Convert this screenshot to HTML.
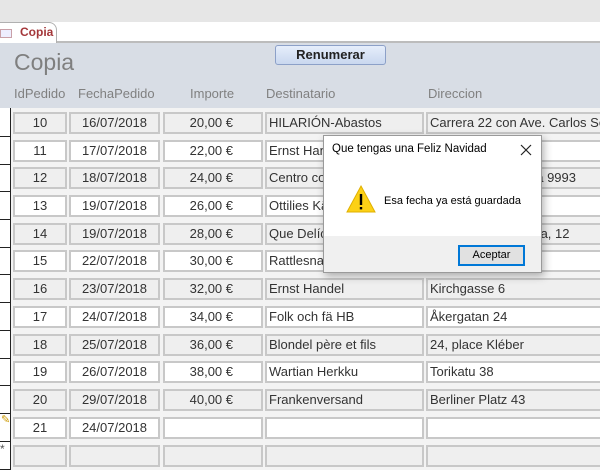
<!DOCTYPE html>
<html><head><meta charset="utf-8"><style>
*{margin:0;padding:0;box-sizing:border-box}
body{width:600px;height:468px;overflow:hidden;position:relative;background:#f3f3f3;font-family:"Liberation Sans",sans-serif;}
.a{position:absolute}
.top{left:0;top:0;width:600px;height:22px;background:#e6e6e6}
.tabbar{left:0;top:22px;width:600px;height:21px;background:#fff;border-bottom:2px solid #bcbcbc}
.tab{left:-4px;top:22px;width:61px;height:23px;background:#fff;border:1px solid #b0b0b0;border-bottom:none;border-radius:0 8px 0 0;}
.hdr{left:0;top:43px;width:600px;height:65px;background:#d8dde5}
.lbl{color:#808080;font-size:13px;top:86px}
.c{position:absolute;height:22px;border:2px solid #c8c8c8;font-size:13px;color:#333;line-height:18px;white-space:nowrap;overflow:hidden;padding:0 2px}
.g{background:#efefef}.w{background:#fff}
.ctr{text-align:center}.r{text-align:right;padding-right:28px}
.sel{position:absolute;left:0;width:11px;border-right:1px solid #222;border-bottom:1px solid #222;background:#fff}
</style></head><body>
<div class="a top"></div>
<div class="a tabbar"></div>
<div class="a tab"></div>
<div class="a" style="left:0;top:29px;width:12px;height:9px;border:1px solid #c9a0a8;background:#eef"></div>
<div class="a" style="left:20px;top:25px;font-size:12px;font-weight:bold;color:#a4373a">Copia</div>
<div class="a hdr"></div>
<div class="a" style="left:14px;top:49px;font-size:23px;color:#7f7f7f">Copia</div>
<div class="a" style="left:275px;top:45px;width:111px;height:20px;border:1px solid #8ca0c8;border-radius:3px;background:linear-gradient(#e6eefb,#c9d7ef);font-size:13px;font-weight:bold;text-align:center;line-height:18px;color:#222">Renumerar</div>
<div class="a lbl" style="left:14px">IdPedido</div>
<div class="a lbl" style="left:78px">FechaPedido</div>
<div class="a lbl" style="left:190px">Importe</div>
<div class="a lbl" style="left:266px">Destinatario</div>
<div class="a lbl" style="left:428px">Direccion</div>
<div class="a" style="left:0;top:108px;width:11px;height:360px;background:#fff;border-right:1px solid #222"></div>

<div class="sel" style="top:108px;height:29px"></div><div class="c g ctr" style="left:13px;top:112px;width:54px">10</div><div class="c g ctr" style="left:69px;top:112px;width:91px">16/07/2018</div><div class="c g r" style="left:163px;top:112px;width:100px">20,00 €</div><div class="c g" style="left:265px;top:112px;width:159px">HILARIÓN-Abastos</div><div class="c g" style="left:426px;top:112px;width:180px">Carrera 22 con Ave. Carlos Soublette</div>
<div class="sel" style="top:137px;height:28px"></div><div class="c w ctr" style="left:13px;top:140px;width:54px">11</div><div class="c w ctr" style="left:69px;top:140px;width:91px">17/07/2018</div><div class="c w r" style="left:163px;top:140px;width:100px">22,00 €</div><div class="c w" style="left:265px;top:140px;width:159px">Ernst Handel</div><div class="c w" style="left:426px;top:140px;width:180px">Kirchgasse 6</div>
<div class="sel" style="top:165px;height:27px"></div><div class="c g ctr" style="left:13px;top:167px;width:54px">12</div><div class="c g ctr" style="left:69px;top:167px;width:91px">18/07/2018</div><div class="c g r" style="left:163px;top:167px;width:100px">24,00 €</div><div class="c g" style="left:265px;top:167px;width:159px">Centro comercial Moctezuma</div><div class="c g" style="left:426px;top:167px;width:180px">Sierras de Granada 9993</div>
<div class="sel" style="top:192px;height:28px"></div><div class="c w ctr" style="left:13px;top:195px;width:54px">13</div><div class="c w ctr" style="left:69px;top:195px;width:91px">19/07/2018</div><div class="c w r" style="left:163px;top:195px;width:100px">26,00 €</div><div class="c w" style="left:265px;top:195px;width:159px">Ottilies Käseladen</div><div class="c w" style="left:426px;top:195px;width:180px">Mehrheimerstr. 369</div>
<div class="sel" style="top:220px;height:28px"></div><div class="c g ctr" style="left:13px;top:223px;width:54px">14</div><div class="c g ctr" style="left:69px;top:223px;width:91px">19/07/2018</div><div class="c g r" style="left:163px;top:223px;width:100px">28,00 €</div><div class="c g" style="left:265px;top:223px;width:159px">Que Delícia</div><div class="c g" style="left:426px;top:223px;width:180px">Rua da Panificadora, 12</div>
<div class="sel" style="top:248px;height:27px"></div><div class="c w ctr" style="left:13px;top:250px;width:54px">15</div><div class="c w ctr" style="left:69px;top:250px;width:91px">22/07/2018</div><div class="c w r" style="left:163px;top:250px;width:100px">30,00 €</div><div class="c w" style="left:265px;top:250px;width:159px">Rattlesnake Canyon Grocery</div><div class="c w" style="left:426px;top:250px;width:180px">2817 Milton Dr.</div>
<div class="sel" style="top:275px;height:28px"></div><div class="c g ctr" style="left:13px;top:278px;width:54px">16</div><div class="c g ctr" style="left:69px;top:278px;width:91px">23/07/2018</div><div class="c g r" style="left:163px;top:278px;width:100px">32,00 €</div><div class="c g" style="left:265px;top:278px;width:159px">Ernst Handel</div><div class="c g" style="left:426px;top:278px;width:180px">Kirchgasse 6</div>
<div class="sel" style="top:303px;height:28px"></div><div class="c w ctr" style="left:13px;top:306px;width:54px">17</div><div class="c w ctr" style="left:69px;top:306px;width:91px">24/07/2018</div><div class="c w r" style="left:163px;top:306px;width:100px">34,00 €</div><div class="c w" style="left:265px;top:306px;width:159px">Folk och fä HB</div><div class="c w" style="left:426px;top:306px;width:180px">Åkergatan 24</div>
<div class="sel" style="top:331px;height:28px"></div><div class="c g ctr" style="left:13px;top:334px;width:54px">18</div><div class="c g ctr" style="left:69px;top:334px;width:91px">25/07/2018</div><div class="c g r" style="left:163px;top:334px;width:100px">36,00 €</div><div class="c g" style="left:265px;top:334px;width:159px">Blondel père et fils</div><div class="c g" style="left:426px;top:334px;width:180px">24, place Kléber</div>
<div class="sel" style="top:359px;height:27px"></div><div class="c w ctr" style="left:13px;top:361px;width:54px">19</div><div class="c w ctr" style="left:69px;top:361px;width:91px">26/07/2018</div><div class="c w r" style="left:163px;top:361px;width:100px">38,00 €</div><div class="c w" style="left:265px;top:361px;width:159px">Wartian Herkku</div><div class="c w" style="left:426px;top:361px;width:180px">Torikatu 38</div>
<div class="sel" style="top:386px;height:28px"></div><div class="c g ctr" style="left:13px;top:389px;width:54px">20</div><div class="c g ctr" style="left:69px;top:389px;width:91px">29/07/2018</div><div class="c g r" style="left:163px;top:389px;width:100px">40,00 €</div><div class="c g" style="left:265px;top:389px;width:159px">Frankenversand</div><div class="c g" style="left:426px;top:389px;width:180px">Berliner Platz 43</div>
<div class="sel" style="top:414px;height:28px"></div><div class="c w ctr" style="left:13px;top:417px;width:54px">21</div><div class="c w ctr" style="left:69px;top:417px;width:91px">24/07/2018</div><div class="c w r" style="left:163px;top:417px;width:100px"></div><div class="c w" style="left:265px;top:417px;width:159px"></div><div class="c w" style="left:426px;top:417px;width:180px"></div>
<div class="a" style="left:1px;top:413px;font-size:11px;color:#c90">✎</div>
<div class="sel" style="top:442px;height:28px"></div><div class="c g" style="left:13px;top:445px;width:54px"></div><div class="c g" style="left:69px;top:445px;width:91px"></div><div class="c g" style="left:163px;top:445px;width:100px"></div><div class="c g" style="left:265px;top:445px;width:159px"></div><div class="c g" style="left:426px;top:445px;width:180px"></div>
<div class="a" style="left:0;top:442px;font-size:12px;color:#555">*</div>

<div class="a" style="left:323px;top:135px;width:219px;height:138px;background:#fff;border:1px solid #9a9a9a;box-shadow:2px 3px 8px rgba(0,0,0,.3)">
 <div class="a" style="left:8px;top:7px;font-size:11.5px;color:#000">Que tengas una Feliz Navidad</div>
 <svg class="a" style="left:196px;top:8px" width="12" height="12" viewBox="0 0 12 12"><path d="M1 1L11 11M11 1L1 11" stroke="#222" stroke-width="1.2"/></svg>
 <svg class="a" style="left:21px;top:48px" width="32" height="30" viewBox="0 0 32 30"><path d="M16 2 L30 28 L2 28 Z" fill="#fcd116" stroke="#e0b000"/><rect x="14.8" y="10" width="2.4" height="11" fill="#000"/><rect x="14.8" y="23" width="2.4" height="2.4" fill="#000"/></svg>
 <div class="a" style="left:60px;top:59px;font-size:11px;color:#000">Esa fecha ya está guardada</div>
 <div class="a" style="left:0;top:100px;width:217px;height:36px;background:#f0f0f0"></div>
 <div class="a" style="left:134px;top:109px;width:67px;height:21px;border:2px solid #0078d7;background:#e1e1e1;font-size:11px;text-align:center;line-height:17px">Aceptar</div>
</div>
</body></html>
